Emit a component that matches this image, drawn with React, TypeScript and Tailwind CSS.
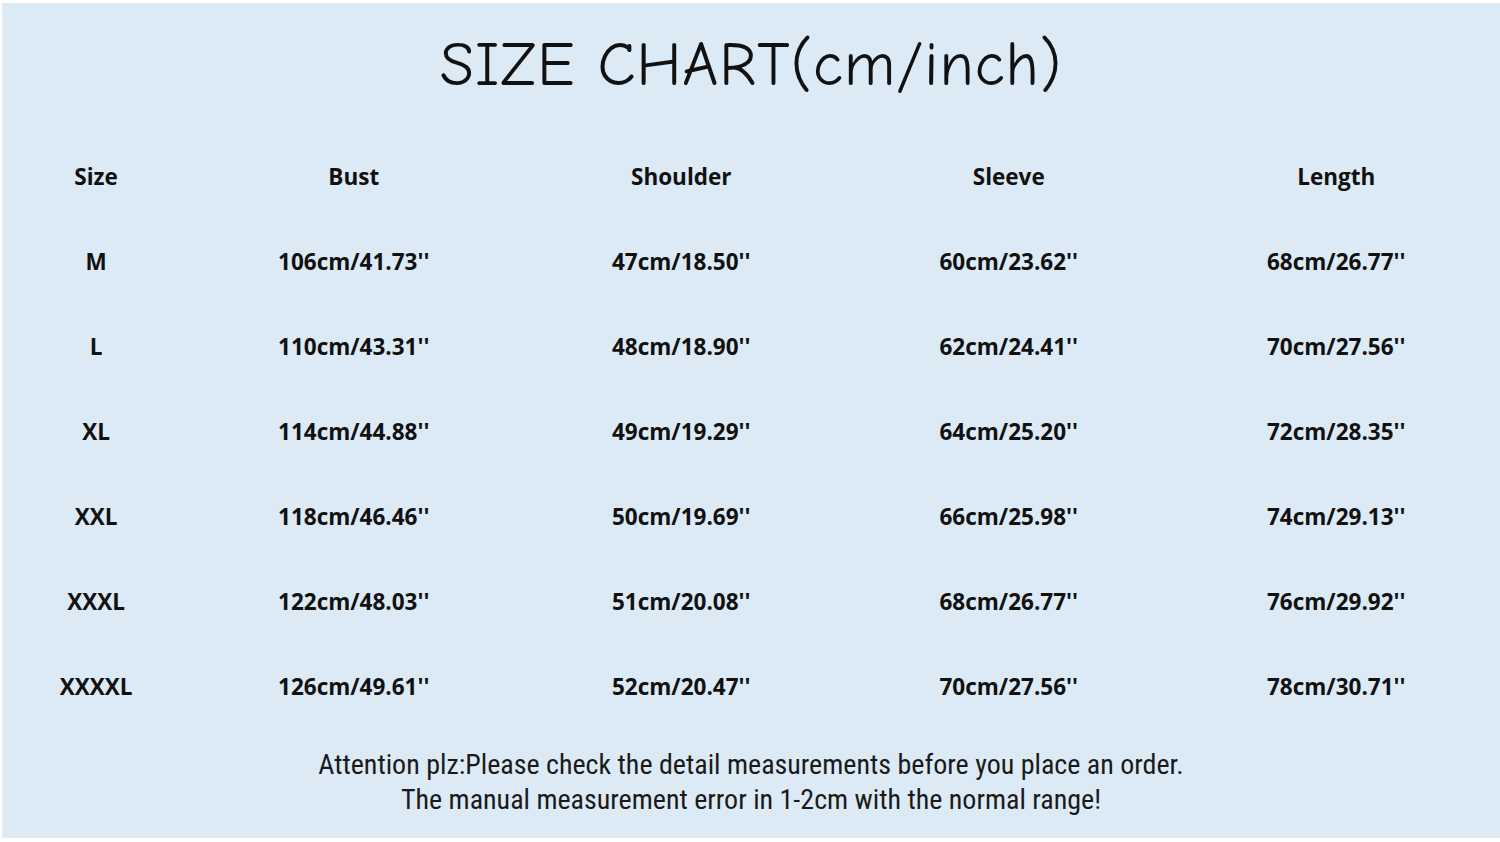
const headers = ["Size", "Bust", "Shoulder", "Sleeve", "Length"];

const rows = [
  ["M", "106cm/41.73''", "47cm/18.50''", "60cm/23.62''", "68cm/26.77''"],
  ["L", "110cm/43.31''", "48cm/18.90''", "62cm/24.41''", "70cm/27.56''"],
  ["XL", "114cm/44.88''", "49cm/19.29''", "64cm/25.20''", "72cm/28.35''"],
  ["XXL", "118cm/46.46''", "50cm/19.69''", "66cm/25.98''", "74cm/29.13''"],
  ["XXXL", "122cm/48.03''", "51cm/20.08''", "68cm/26.77''", "76cm/29.92''"],
  ["XXXXL", "126cm/49.61''", "52cm/20.47''", "70cm/27.56''", "78cm/30.71''"],
];

const App = () => {
  return (
    <div className="w-[1500px] h-[842px] bg-white pt-[3px] pb-[4px] pl-[2px] overflow-hidden">
      <div className="h-full bg-[#dceaf5] flex flex-col text-[#111]">
        <div className="h-[131px] flex items-start justify-center pt-[22px]">
          <h1
            className="text-[62px] leading-[80px] tracking-[1px] font-normal"
            style={{ fontFamily: '"Comic Neue", "DejaVu Sans", "Open Sans", cursive' }}
          >
            SIZE CHART(cm/inch)
          </h1>
        </div>

        <div
          className="grid grid-cols-[188px_repeat(4,1fr)] auto-rows-[85px] text-[22.5px] font-bold"
          style={{ fontFamily: '"Open Sans", "Noto Sans", sans-serif' }}
        >
          {headers.map((h) => (
            <div key={h} className="flex items-center justify-center">
              {h}
            </div>
          ))}
          {rows.map((r) =>
            r.map((c, i) => (
              <div key={r[0] + i} className="flex items-center justify-center">
                {c}
              </div>
            ))
          )}
        </div>

        <div
          className="flex flex-col items-center pt-[18px] text-[28px] leading-[35px] text-[#1a1a1a] font-normal"
          style={{ fontFamily: '"Liberation Sans Narrow", "Roboto Condensed", "Liberation Sans", sans-serif' }}
        >
          <p>Attention plz:Please check the detail measurements before you place an order.</p>
          <p>The manual measurement error in 1-2cm with the normal range!</p>
        </div>
      </div>
    </div>
  );
};

export default App;
